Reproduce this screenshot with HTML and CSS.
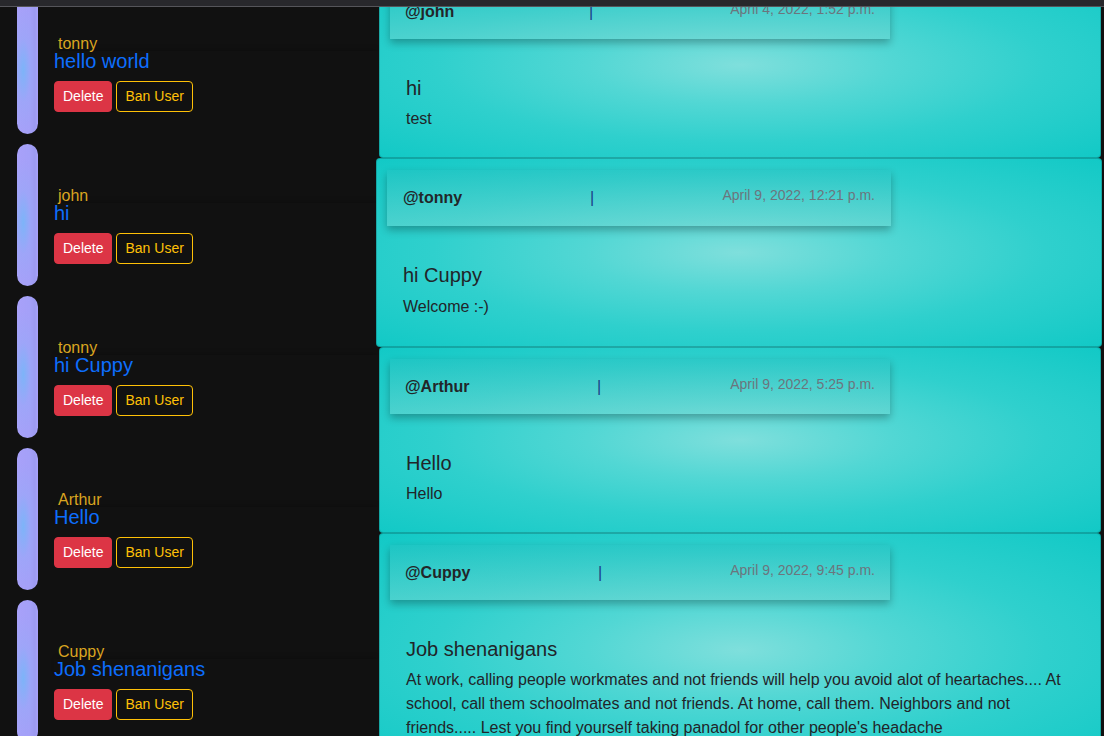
FILE: index.html
```html
<!DOCTYPE html>
<html lang="en">
<head>
<meta charset="utf-8">
<title>Posts moderation</title>
<link rel="stylesheet" href="styles.css">
</head>
<body>
<div class="topbar"></div>
<div class="layout">
  <aside class="side">
    <div class="side-row">
      <div class="pill"></div>
      <div class="side-info">
        <div class="side-user">tonny</div>
        <div class="side-title">hello world</div>
        <div class="side-actions"><button class="btn btn-danger">Delete</button><button class="btn btn-warn">Ban User</button></div>
      </div>
    </div>
    <div class="side-row">
      <div class="pill"></div>
      <div class="side-info">
        <div class="side-user">john</div>
        <div class="side-title">hi</div>
        <div class="side-actions"><button class="btn btn-danger">Delete</button><button class="btn btn-warn">Ban User</button></div>
      </div>
    </div>
    <div class="side-row">
      <div class="pill"></div>
      <div class="side-info">
        <div class="side-user">tonny</div>
        <div class="side-title">hi Cuppy</div>
        <div class="side-actions"><button class="btn btn-danger">Delete</button><button class="btn btn-warn">Ban User</button></div>
      </div>
    </div>
    <div class="side-row">
      <div class="pill"></div>
      <div class="side-info">
        <div class="side-user">Arthur</div>
        <div class="side-title">Hello</div>
        <div class="side-actions"><button class="btn btn-danger">Delete</button><button class="btn btn-warn">Ban User</button></div>
      </div>
    </div>
    <div class="side-row">
      <div class="pill"></div>
      <div class="side-info">
        <div class="side-user">Cuppy</div>
        <div class="side-title">Job shenanigans</div>
        <div class="side-actions"><button class="btn btn-danger">Delete</button><button class="btn btn-warn">Ban User</button></div>
      </div>
    </div>
  </aside>
  <main class="feed">
    <article class="post">
      <header class="post-head">
        <span class="post-user">@john</span><span class="sep">|</span><span class="post-date">April 4, 2022, 1:52 p.m.</span>
      </header>
      <div class="post-body">
        <h5 class="post-title">hi</h5>
        <p class="post-text">test</p>
      </div>
    </article>
    <article class="post post-hover">
      <header class="post-head">
        <span class="post-user">@tonny</span><span class="sep sep-a">|</span><span class="post-date">April 9, 2022, 12:21 p.m.</span>
      </header>
      <div class="post-body">
        <h5 class="post-title">hi Cuppy</h5>
        <p class="post-text">Welcome :-)</p>
      </div>
    </article>
    <article class="post">
      <header class="post-head">
        <span class="post-user">@Arthur</span><span class="sep sep-b">|</span><span class="post-date">April 9, 2022, 5:25 p.m.</span>
      </header>
      <div class="post-body">
        <h5 class="post-title">Hello</h5>
        <p class="post-text">Hello</p>
      </div>
    </article>
    <article class="post">
      <header class="post-head">
        <span class="post-user">@Cuppy</span><span class="sep sep-c">|</span><span class="post-date">April 9, 2022, 9:45 p.m.</span>
      </header>
      <div class="post-body">
        <h5 class="post-title">Job shenanigans</h5>
        <p class="post-text">At work, calling people workmates and not friends will help you avoid alot of heartaches.... At school, call them schoolmates and not friends. At home, call them. Neighbors and not friends..... Lest you find yourself taking panadol for other people's headache</p>
      </div>
    </article>
  </main>
</div>
</body>
</html>
```

FILE: styles.css
```css
* { box-sizing: border-box; }

html, body {
  margin: 0;
  padding: 0;
  height: 100%;
  overflow: hidden;
}

body {
  background: #111111;
  font-family: "Liberation Sans", Arial, sans-serif;
  color: #212529;
}

.topbar {
  position: fixed;
  top: 0;
  left: 0;
  right: 0;
  height: 7px;
  background: #28282c;
  border-bottom: 1px solid #55555a;
  z-index: 10;
}

.layout {
  display: grid;
  grid-template-columns: 379px 722px;
  margin-top: -28px;
  align-items: start;
}

/* ---------- left column ---------- */
.side {
  padding-top: 20px;
}

.side-row {
  display: flex;
  height: 152px;
}

.pill {
  flex: none;
  width: 21px;
  height: 142px;
  margin-left: 17px;
  border-radius: 11px;
  background:
    radial-gradient(ellipse 70% 45% at 30% 55%, rgba(120, 182, 248, 0.9) 0%, rgba(150, 170, 249, 0.5) 50%, rgba(168, 160, 249, 0) 100%),
    linear-gradient(to right, #a8a1f9 0%, #a4a0f8 60%, #9c9af0 85%, #a8a1f9 100%);
}

.side-info {
  flex: 1;
  margin-left: 16px;
  padding-top: 45px;
}

.side-user {
  padding-left: 4px;
  font-size: 16px;
  line-height: 14px;
  color: #daa520;
}

.side-title {
  font-size: 20px;
  line-height: 20px;
  color: #0d6efd;
  box-shadow: 0 -4px 6px -4px rgba(0, 0, 0, 0.35);
  margin-right: -1px;
}

.side-actions {
  display: flex;
  gap: 4px;
  margin-top: 10px;
}

.btn {
  font-family: "Liberation Sans", Arial, sans-serif;
  font-size: 14px;
  line-height: 21px;
  padding: 4px 8px;
  border-radius: 4px;
  border: 1px solid transparent;
  background: transparent;
}

.btn-danger {
  background: #dc3545;
  border-color: #dc3545;
  color: #ffffff;
}

.btn-warn {
  border-color: #ffc107;
  color: #ffc107;
}

/* ---------- right column ---------- */
.feed {
  display: flex;
  flex-direction: column;
}

.post {
  height: 186px;
  border: 1px solid rgba(0, 0, 0, 0.18);
  border-radius: 4px;
  padding: 11px 10px;
  background: radial-gradient(ellipse at center, #7fdfdc 0%, #52d7d4 30%, #2fd0cd 60%, #12c9c6 100%);
  overflow: hidden;
}

.post:last-child {
  height: auto;
}

.post-hover {
  height: 189px;
  margin: 0 -1px 0 -3px;
}

.post-head {
  display: flex;
  align-items: center;
  width: 500px;
  height: 55px;
  padding: 0 15px;
  background: linear-gradient(to bottom, rgba(40, 190, 190, 0.35), rgba(120, 215, 210, 0.45));
  box-shadow: 0 4px 8px rgba(0, 0, 0, 0.28);
}

.post-hover .post-head {
  width: 504px;
  height: 56px;
  padding: 0 16px;
}

.post-user {
  width: 185px;
  font-size: 16px;
  font-weight: bold;
  color: #222629;
}

.sep {
  margin-left: -1px;
  color: #1b3a86;
  font-size: 16px;
}

.sep-a { margin-left: 2px; }
.sep-b { margin-left: 7px; }
.sep-c { margin-left: 8px; }

.post-date {
  margin-left: auto;
  margin-bottom: 6px;
  font-size: 14px;
  color: #6c757d;
}

.post-body {
  padding: 37px 16px 0;
}

.post-title {
  margin: 0 0 7px;
  font-size: 20px;
  line-height: 24px;
  font-weight: normal;
  color: #212529;
}

.post-text {
  margin: 0 0 15px;
  font-size: 16px;
  line-height: 24px;
  color: #212529;
}

.post-hover .post-title { margin-bottom: 8px; }
.post-hover .post-text { margin-bottom: 16px; }
```
